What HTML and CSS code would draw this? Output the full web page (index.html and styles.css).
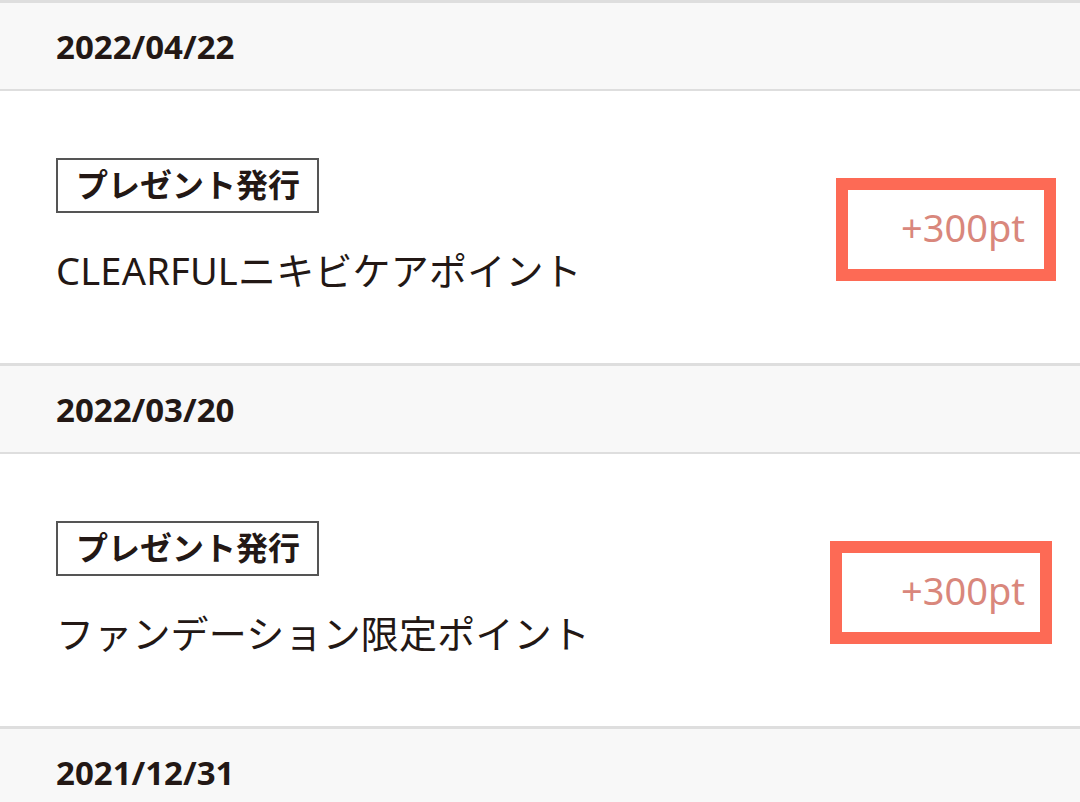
FILE: index.html
```html
<!DOCTYPE html>
<html lang="ja">
<head>
<meta charset="utf-8">
<link rel="stylesheet" href="styles.css">
</head>
<body>
<div class="list">
  <div class="date">2022/04/22</div>
  <div class="item">
    <div class="info">
      <span class="tag">プレゼント発行</span>
      <div class="title">CLEARFULニキビケアポイント</div>
    </div>
    <div class="pts">+300pt</div>
  </div>
  <div class="date">2022/03/20</div>
  <div class="item">
    <div class="info">
      <span class="tag">プレゼント発行</span>
      <div class="title">ファンデーション限定ポイント</div>
    </div>
    <div class="pts pts-b">+300pt</div>
  </div>
  <div class="date">2021/12/31</div>
</div>
</body>
</html>
```
FILE: styles.css
```css
html, body {
  margin: 0;
  padding: 0;
  background: #fff;
}
body {
  width: 1080px;
  height: 802px;
  overflow: hidden;
  font-family: "Noto Sans", "Noto Sans CJK JP", sans-serif;
  color: #231815;
}
.list {
  display: flex;
  flex-direction: column;
}
.date {
  box-sizing: border-box;
  height: 91px;
  border-top: 3px solid #dedede;
  border-bottom: 2px solid #dedede;
  background: #f8f8f8;
  display: flex;
  align-items: center;
  padding-left: 56px;
  font-size: 33px;
  font-weight: 700;
}
.item {
  box-sizing: border-box;
  height: 272px;
  display: flex;
  align-items: center;
  justify-content: space-between;
  padding: 0 24px 0 56px;
}
.info {
  display: flex;
  flex-direction: column;
  align-items: flex-start;
  gap: 29px;
  margin-top: 2px;
}
.tag {
  box-sizing: border-box;
  height: 55px;
  width: 263px;
  display: flex;
  align-items: center;
  border: 2px solid #555;
  padding: 0 0 0 18px;
  font-size: 32px;
  font-weight: 700;
  line-height: 1;
}
.title {
  font-size: 38px;
  line-height: 57px;
  letter-spacing: 0.2px;
}
.pts {
  box-sizing: border-box;
  width: 220px;
  height: 103px;
  margin-top: 4px;
  border: 12px solid #fd6a55;
  display: flex;
  align-items: center;
  justify-content: flex-end;
  padding: 0 19px 5px 0;
  font-size: 38px;
  color: #d9877c;
}
.pts-b {
  width: 222px;
  margin-right: 4px;
  padding-right: 15px;
}
```
